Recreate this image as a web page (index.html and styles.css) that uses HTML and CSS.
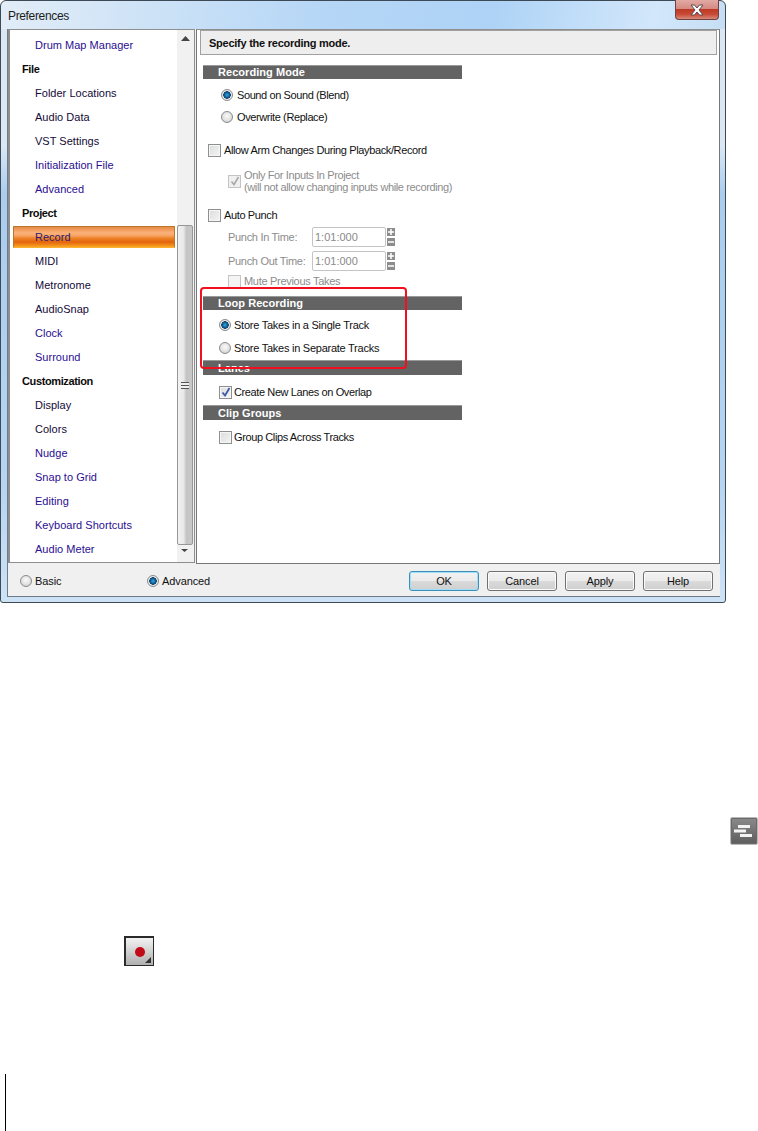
FILE: index.html
```html
<!DOCTYPE html>
<html lang="en">
<head>
<meta charset="utf-8">
<title>Preferences</title>
<link rel="stylesheet" href="styles.css">
</head>
<body>
<section class="window">
  <header class="titlebar">
    <span class="title">Preferences</span>
    <span class="close"><svg width="14" height="12" viewBox="0 0 14 12"><path d="M1 1h3.500L7 4l2.500-3H13L9 6l4 5H9.500L7 8l-2.500 3H1l4-5z" fill="#fff" stroke="#5a4a50" stroke-width="1"/></svg></span>
  </header>
  <div class="client">
    <div class="panes">
      <nav class="tree">
        <div class="tree-list">
          <div class="item blue">Drum Map Manager</div>
          <div class="group">File</div>
          <div class="item">Folder Locations</div>
          <div class="item">Audio Data</div>
          <div class="item">VST Settings</div>
          <div class="item blue">Initialization File</div>
          <div class="item blue">Advanced</div>
          <div class="group">Project</div>
          <div class="item selected">Record</div>
          <div class="item">MIDI</div>
          <div class="item">Metronome</div>
          <div class="item">AudioSnap</div>
          <div class="item blue">Clock</div>
          <div class="item blue">Surround</div>
          <div class="group">Customization</div>
          <div class="item">Display</div>
          <div class="item">Colors</div>
          <div class="item blue">Nudge</div>
          <div class="item blue">Snap to Grid</div>
          <div class="item blue">Editing</div>
          <div class="item blue">Keyboard Shortcuts</div>
          <div class="item blue">Audio Meter</div>
        </div>
        <div class="scrollbar">
          <svg class="arrow" width="9" height="5" viewBox="0 0 9 5"><path d="M4.500 0L9 5H0z" fill="#444"/></svg>
          <div class="thumb"><span class="grip"></span></div>
          <svg class="arrow" width="7" height="3" viewBox="0 0 7 3"><path d="M0 0h7L3.500 3z" fill="#444"/></svg>
        </div>
      </nav>
      <main class="settings">
        <div class="hint">Specify the recording mode.</div>
        <div class="form">
          <h2 class="bar bar-first">Recording Mode</h2>
          <label class="row radio-in gap-a"><i class="radio on"></i>Sound on Sound (Blend)</label>
          <label class="row radio-in"><i class="radio"></i>Overwrite (Replace)</label>
          <label class="row check-out gap-b"><i class="box"></i>Allow Arm Changes During Playback/Record</label>
          <div class="row check-in two gap-c dim"><i class="box tick"><svg width="10" height="10" viewBox="0 0 10 10"><path d="M1.500 5.500L4 8.500L8.500 1" fill="none" stroke="#a9a9a9" stroke-width="1.600"/></svg></i><span>Only For Inputs In Project<br>(will not allow changing inputs while recording)</span></div>
          <label class="row check-out gap-b"><i class="box"></i>Auto Punch</label>
          <div class="time t1 dim"><span class="time-label">Punch In Time:</span><span class="field">1:01:000</span><span class="spin"><svg width="8" height="20" viewBox="0 0 8 20"><path d="M0 1h8v8H0zM0 11h8v8H0z" fill="#8c8c8c"/><path d="M1 5h6M4 2v6M1 15h6" stroke="#fff" stroke-width="1.500"/></svg></span></div>
          <div class="time t2 dim"><span class="time-label">Punch Out Time:</span><span class="field">1:01:000</span><span class="spin"><svg width="8" height="20" viewBox="0 0 8 20"><path d="M0 1h8v8H0zM0 11h8v8H0z" fill="#8c8c8c"/><path d="M1 5h6M4 2v6M1 15h6" stroke="#fff" stroke-width="1.500"/></svg></span></div>
          <div class="row check-in short dim"><i class="box flat"></i>Mute Previous Takes</div>
          <div class="loop">
            <h2 class="bar">Loop Recording</h2>
            <label class="row radio-loop gap-d"><i class="radio on"></i>Store Takes in a Single Track</label>
            <label class="row radio-loop gap-e"><i class="radio"></i>Store Takes in Separate Tracks</label>
            <h2 class="bar tall gap-e">Lanes</h2>
            <span class="callout"></span>
          </div>
          <label class="row check-loop gap-f"><i class="box"><svg width="10" height="10" viewBox="0 0 10 10"><path d="M1.500 5.500L4 8.500L8.500 1" fill="none" stroke="#3b5aa8" stroke-width="1.800"/></svg></i>Create New Lanes on Overlap</label>
          <h2 class="bar tall gap-g">Clip Groups</h2>
          <label class="row check-loop gap-f"><i class="box"></i>Group Clips Across Tracks</label>
        </div>
      </main>
    </div>
    <footer class="footer">
      <label class="mode basic"><i class="radio"></i>Basic</label>
      <label class="mode advanced"><i class="radio on"></i>Advanced</label>
      <div class="buttons">
        <button class="btn default">OK</button>
        <button class="btn">Cancel</button>
        <button class="btn">Apply</button>
        <button class="btn">Help</button>
      </div>
    </footer>
  </div>
</section>
<div class="gantt-icon"><svg width="26" height="26" viewBox="0 0 26 26"><path d="M7 7h12v3H7zM3 11.500h12v3H3zM9 16h12v3H9z" fill="#f2f2f2"/></svg></div>
<div class="record-icon"><span class="dot"></span><span class="corner"></span></div>
<div class="margin-line"></div>
</body>
</html>
```
FILE: styles.css
```css
* { box-sizing: border-box; }
html, body { margin: 0; padding: 0; background: #fff; }
body {
  width: 758px;
  height: 1131px;
  overflow: hidden;
  font-family: "Liberation Sans", Arial, sans-serif;
  font-size: 11px;
  color: #111;
}
.window {
  width: 726px;
  height: 603px;
  padding: 0 5px 5px 8px;
  border: 1px solid #3d4a55;
  border-radius: 6px 6px 3px 3px;
  background:
    linear-gradient(100deg, #e2edf7 0%, #b5d6f6 45%, #aed3f6 68%, #d2e7fb 90%, #c6def3 100%) top / 100% 28px no-repeat,
    linear-gradient(#dbe8f4 0, #dbe8f4 24%, #aacdf0 32%, #b5d5f2 80%, #cde2f5 100%);
  display: flex;
  flex-direction: column;
}
.titlebar {
  height: 28px;
  flex: none;
  display: flex;
  justify-content: space-between;
  align-items: flex-start;
}
.title {
  margin: 8px 0 0 -1px;
  font-size: 12px;
  line-height: 14px;
  letter-spacing: -.35px;
  color: #1c1c1c;
}
.close {
  width: 44px;
  height: 20px;
  margin: -1px 1px 0 0;
  display: flex;
  align-items: center;
  justify-content: center;
  border: 1px solid #70413e;
  border-top: 0;
  border-radius: 0 0 4px 4px;
  background: linear-gradient(#e2aaa5 0%, #d58a82 45%, #bd3a26 50%, #c84a34 75%, #d98a7c 100%);
}
.client {
  flex: 1;
  display: flex;
  flex-direction: column;
  margin-left: -2px;
  background: #f0f0f0;
  border-left: 1px solid #6f7c88;
  border-bottom: 1px solid #6f7c88;
}
.panes {
  height: 535px;
  flex: none;
  display: flex;
  gap: 1px;
}
.tree {
  width: 187px;
  height: 534px;
  display: flex;
  background: #fff;
  border: 1px solid #8e8e8e;
  border-left-width: 2px;
  overflow: hidden;
}
.tree-list {
  width: 167px;
  padding: 3px 2px 0 3px;
  flex: none;
}
.item, .group {
  height: 24px;
  line-height: 24px;
  white-space: nowrap;
}
.item {
  padding-left: 22px;
  letter-spacing: .02px;
  color: #140a38;
}
.item.blue { color: #2a0e92; }
.group {
  padding-left: 9px;
  font-weight: bold;
  letter-spacing: -.38px;
  color: #0b0b0b;
}
.item.selected {
  height: 22px;
  line-height: 20px;
  margin: 1px 0;
  padding-left: 21px;
  color: #2a1a70;
  border: 1px solid #b87a2a;
  border-bottom-color: #f7b233;
  border-radius: 1px;
  background: linear-gradient(#e98a45 0, #fbb27a 30%, #f5a060 45%, #ee8428 55%, #e4640e 75%, #f08a18 90%, #fca820 100%);
}
.scrollbar {
  flex: 1;
  display: flex;
  flex-direction: column;
  align-items: flex-start;
  padding: 6px 0 8px;
  background: #f1f1f1;
}
.arrow { margin-left: 4px; }
.thumb {
  width: 16px;
  height: 320px;
  margin-top: 184px;
  margin-bottom: 4px;
  border: 1px solid #979797;
  border-radius: 2px;
  background: linear-gradient(90deg, #f2f2f2 0%, #e8e8e8 40%, #c4c4c4 60%, #c8c8c8 100%);
  display: flex;
  align-items: center;
  justify-content: center;
}
.grip {
  width: 8px;
  height: 7px;
  background: repeating-linear-gradient(#555 0, #555 1px, #eee 1px, #eee 3px);
}
.settings {
  flex: 1;
  height: 535px;
  background: #fff;
  border: 1px solid #777;
  border-top-color: #8e8e8e;
  padding: 0 2px 0 3px;
}
.hint {
  height: 25px;
  line-height: 24px;
  padding-left: 8px;
  background: #eee;
  border: 1px solid #a0a0a0;
  font-weight: bold;
  font-size: 11px;
  letter-spacing: -.25px;
  color: #111;
}
.form {
  width: 259px;
  margin-left: 3px;
  font-size: 11px;
  letter-spacing: -.3px;
}
.bar {
  height: 14px;
  margin: 0;
  padding-left: 15px;
  line-height: 12px;
  font-size: 11px;
  font-weight: bold;
  letter-spacing: .05px;
  color: #fff;
  background: #636363;
  border-top: 1px solid #9a9a9a;
  white-space: nowrap;
  overflow: hidden;
}
.bar.tall { height: 15px; line-height: 14px; }
.bar-first { margin-top: 10px; }
.row {
  height: 22px;
  display: flex;
  align-items: center;
  white-space: nowrap;
}
.radio-in { padding-left: 18px; gap: 4px; letter-spacing: -.4px; }
.radio-loop { padding-left: 16px; gap: 3px; letter-spacing: -.25px; }
.check-out { padding-left: 5px; gap: 3px; letter-spacing: -.37px; }
.check-in { padding-left: 25px; gap: 3px; }
.check-loop { padding-left: 16px; gap: 2px; letter-spacing: -.39px; }
.two { height: 24px; line-height: 12px; letter-spacing: -.38px; }
.short { height: 16px; margin-top: 2px; }
.gap-a { margin-top: 5px; }
.gap-b { margin-top: 11px; }
.gap-c { margin-top: 8px; }
.gap-d { margin-top: 4px; }
.gap-e { margin-top: 1px; }
.gap-f { margin-top: 6px; }
.gap-g { margin-top: 2px; }
.dim { color: #8c8c8c; }
.radio {
  width: 12px;
  height: 12px;
  flex: none;
  display: inline-block;
  border-radius: 50%;
  border: 1px solid #8b8b8b;
  background: radial-gradient(circle at 50% 40%, #fafafa 0, #e2e2e2 55%, #c4c4c4 100%);
}
.radio.on {
  background: radial-gradient(circle at 50% 50%, #35a8dc 0, #0f5f96 2.500px, #0d3f6c 3.500px, #efefef 4px, #d4d4d4 100%);
}
.box {
  width: 13px;
  height: 13px;
  flex: none;
  display: flex;
  align-items: center;
  justify-content: center;
  border: 1px solid #8e8f8f;
  background: linear-gradient(135deg, #dcdcdc, #f4f4f4);
  box-shadow: inset 0 0 0 1px #f6f6f6;
}
.dim .box {
  border-color: #c4c4c4;
  background: #f0f0f0;
  box-shadow: none;
}
.box.flat { background: #f4f4f4; }
.time {
  height: 20px;
  margin-top: 1px;
  padding-left: 25px;
  display: flex;
  align-items: center;
}
.t2 { margin-top: 4px; }
.time-label { width: 84px; flex: none; }
.field {
  width: 74px;
  height: 20px;
  line-height: 18px;
  padding-left: 2px;
  font-size: 11px;
  letter-spacing: 0;
  color: #8a8a8a;
  background: #fff;
  border: 1px solid #c4c4c4;
  border-radius: 2px;
}
.spin { width: 8px; height: 20px; margin-left: 1px; }
.loop {
  margin-top: 7px;
  position: relative;
}
.callout {
  position: absolute;
  left: -3px;
  top: -9px;
  width: 207px;
  height: 82px;
  border: 2px solid #f01020;
  border-radius: 4px;
  pointer-events: none;
}
.footer {
  height: 32px;
  padding-top: 2px;
  display: flex;
  align-items: center;
}
.mode { display: flex; align-items: center; gap: 3px; letter-spacing: -.1px; }
.basic { margin-left: 12px; width: 127px; }
.buttons {
  margin-left: auto;
  margin-right: 7px;
  display: flex;
  gap: 8px;
}
.btn {
  width: 70px;
  height: 20px;
  padding: 0;
  font-family: inherit;
  font-size: 11px;
  letter-spacing: -.1px;
  color: #111;
  border: 1px solid #707070;
  border-radius: 3px;
  background: linear-gradient(#f2f2f2 0%, #ebebeb 48%, #dadada 52%, #cfcfcf 100%);
  box-shadow: inset 0 0 0 1px #fbfbfb;
}
.btn.default {
  border-color: #3c8fb8;
  box-shadow: inset 0 0 0 1px #9fe0f8;
}
.gantt-icon {
  width: 28px;
  height: 28px;
  margin: 214px 0 0 730px;
  display: flex;
  align-items: center;
  justify-content: center;
  background: linear-gradient(#8a8a8a, #5d5d5d);
  border: 1px solid #b8b8b8;
  border-radius: 2px;
  box-shadow: inset 0 0 0 1px #6a6a6a;
}
.record-icon {
  position: relative;
  width: 30px;
  height: 30px;
  margin: 91px 0 0 124px;
  border: 2px solid #2a2a2a;
  border-right-width: 1px;
  border-bottom-width: 1px;
  background: linear-gradient(#f2f2f2, #b0b0b0);
  display: flex;
  align-items: center;
  justify-content: center;
}
.dot {
  width: 10px;
  height: 10px;
  border-radius: 50%;
  background: #c00a18;
}
.corner {
  position: absolute;
  right: 2px;
  bottom: 2px;
  width: 0;
  height: 0;
  border-left: 6px solid transparent;
  border-bottom: 6px solid #333;
}
.margin-line {
  width: 1px;
  height: 57px;
  margin: 108px 0 0 5px;
  background: #000;
}
```
